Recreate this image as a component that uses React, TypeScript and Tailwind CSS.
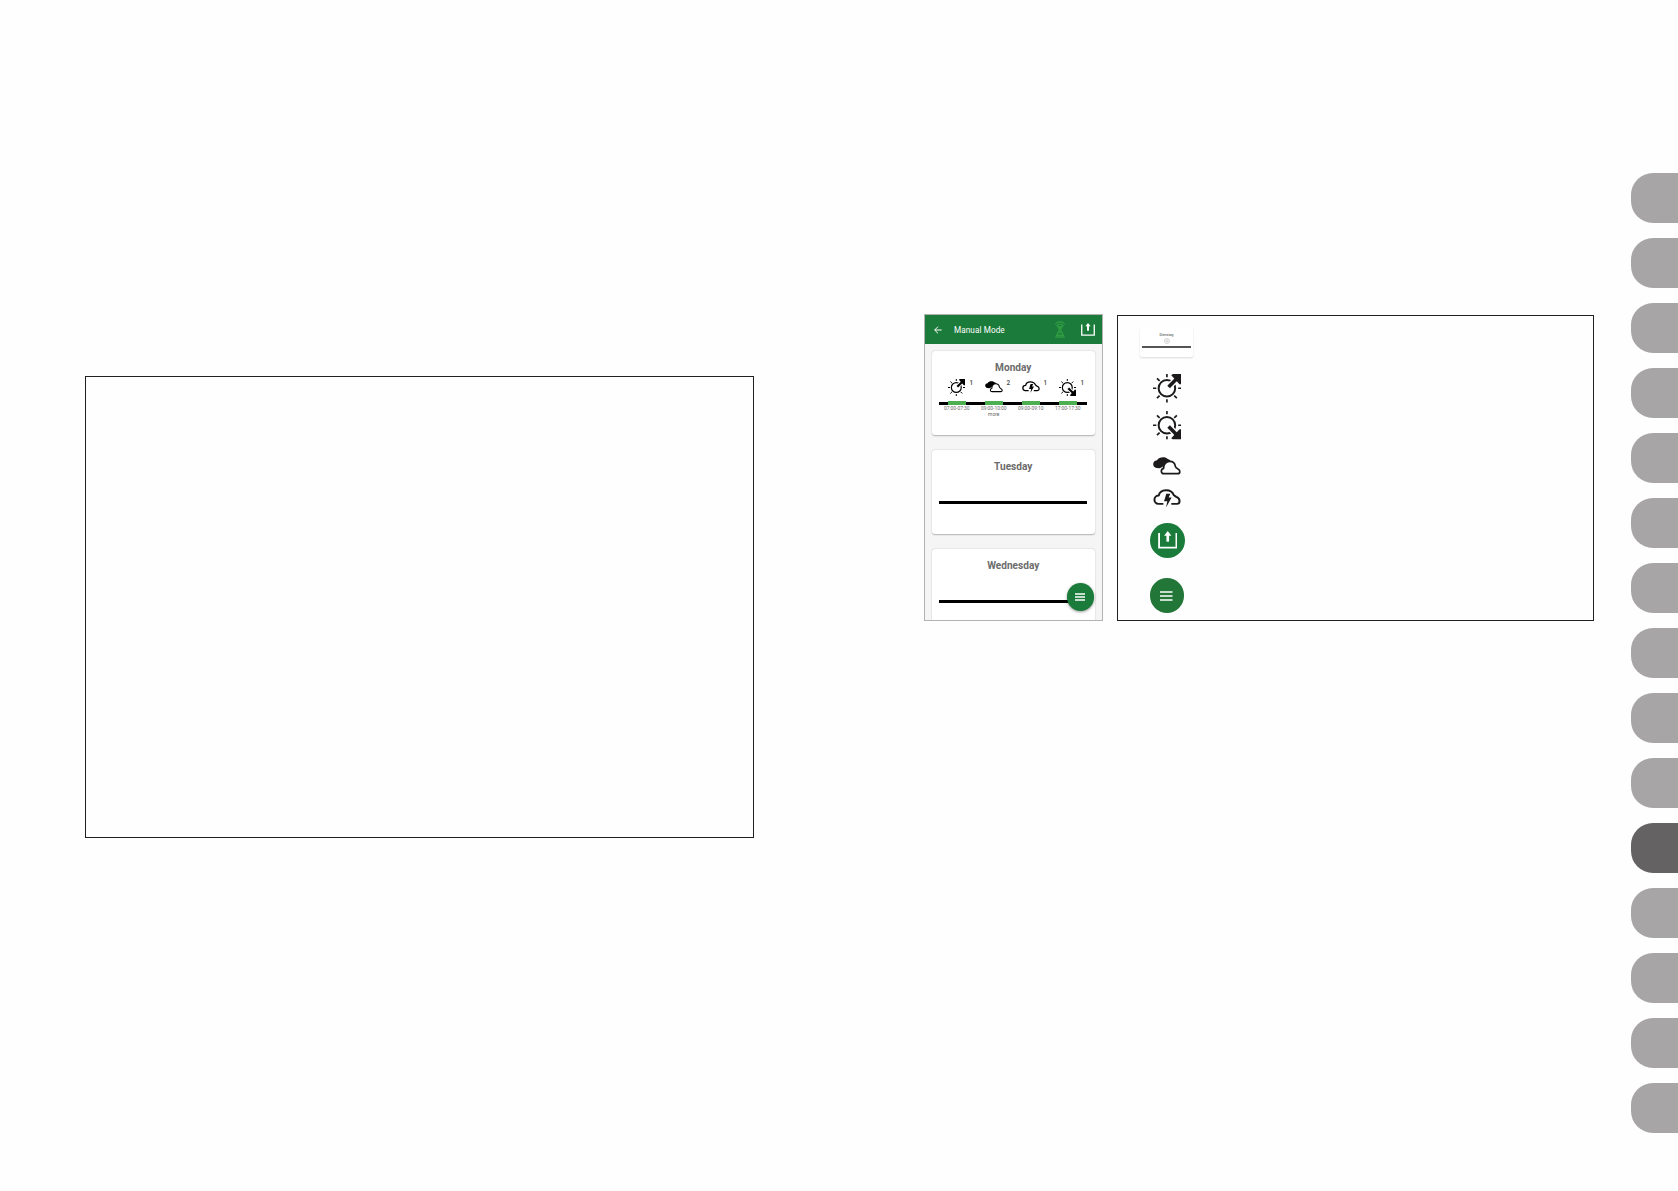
interface IconProps {
  className?: string;
}

interface Slot {
  icon: React.ReactNode;
  count: number;
  time: string;
  more?: boolean;
}

const SunRising: React.FC<IconProps> = ({ className }) => (
  <svg viewBox="0 0 86 86" className={className} fill="none" stroke="currentColor">
    <circle cx="42" cy="43" r="25" strokeWidth="6" />
    <path
      d="M42 0v10M42 76v10M0 43h10M76 43h10M12 13l8 8M12 73l8-8M72 73l-8-8"
      strokeWidth="5"
    />
    <path d="M50 36L68 18" stroke="white" strokeWidth="19" />
    <path d="M47 39L70 16" strokeWidth="11" />
    <path d="M55 4L60 0H86V31L80 31Z" fill="currentColor" stroke="none" />
  </svg>
);

const Clouds: React.FC<IconProps> = ({ className }) => (
  <svg viewBox="0 0 84 54" className={className}>
    <path
      d="M11 33C-3 31-3 11 12 10C17-1 38-2 44 6C51 7 54 12 53 17H41L28 30L20 34Z"
      fill="currentColor"
    />
    <path
      d="M33 50C23 50 22 37 32 34C31 23 39 13 50 13C60 13 66 19 67 28C68 32 71 34 75 36C83 40 82 50 74 50Z"
      fill="white"
      stroke="currentColor"
      strokeWidth="5"
      strokeLinejoin="round"
    />
  </svg>
);

const StormCloud: React.FC<IconProps> = ({ className }) => (
  <svg viewBox="0 0 84 56" className={className}>
    <path
      d="M31 45H16A12 12 0 0 1 17 20C21 -1 55 -2 63 19L70 24C84 29 82 45 72 45H55"
      fill="none"
      stroke="currentColor"
      strokeWidth="6"
      strokeLinejoin="round"
    />
    <path d="M40 14H52L47 26H56L39 56L43 37H33Z" fill="currentColor" />
  </svg>
);

const Upload: React.FC<IconProps> = ({ className }) => (
  <svg viewBox="0 0 58 54" className={className} fill="none" stroke="white">
    <path d="M3 6V50H55V6" strokeWidth="5.5" />
    <path d="M29 32V12" strokeWidth="8" />
    <path d="M18 14L29 0L40 14Z" fill="white" stroke="none" />
  </svg>
);

const Hourglass: React.FC<IconProps> = ({ className }) => (
  <svg viewBox="0 0 34 50" className={className} fill="none" stroke="#2f9b43" strokeWidth="4">
    <path d="M3 9C10 0 24 0 31 9M7 15C12 7 22 7 27 15M11 17L17 24L23 17Z" />
    <path d="M17 22L6 44M17 22L28 44M11 33H23M3 47H31M6 42H28" />
    <circle cx="17" cy="21" r="3" />
  </svg>
);

const slots: Slot[] = [
  {
    icon: <SunRising className="h-[17px] w-[17px]" />,
    count: 1,
    time: "07:00-07:30",
  },
  {
    icon: <Clouds className="h-[11.5px] w-[18px]" />,
    count: 2,
    time: "09:00-10:00",
    more: true,
  },
  {
    icon: <StormCloud className="h-[12px] w-[18px]" />,
    count: 1,
    time: "09:00-09:10",
  },
  {
    icon: <SunRising className="h-[17px] w-[17px] -scale-y-100" />,
    count: 1,
    time: "17:00-17:30",
  },
];

const tabs = Array.from({ length: 15 }, (_, i) => i);

const DayCard: React.FC<{ title: string; children?: React.ReactNode }> = ({
  title,
  children,
}) => (
  <div className="h-[84.5px] w-[162.5px] shrink-0 rounded-[3px] bg-white px-[7.25px] pt-[10px] shadow-[0_0.5px_1.5px_rgba(0,0,0,0.28)]">
    <h2 className="h-[13px] text-center text-[10.1px] leading-[13px] font-bold text-[#6b6b6b]">
      {title}
    </h2>
    {children || <div className="mt-[28.3px] h-[2.9px] bg-black" />}
  </div>
);

const Phone = () => (
  <section className="relative mt-[314px] ml-[170px] flex h-[307px] w-[179px] shrink-0 flex-col overflow-hidden border border-[#b2b2b2] bg-[#f5f5f6]">
    <header className="flex h-[29px] shrink-0 items-center bg-[#1a7b3a] pl-[9px] text-white">
      <svg viewBox="0 0 24 24" className="h-[8px] w-[8px]" fill="none" stroke="currentColor" strokeWidth="3">
        <path d="M23 12H2M12 2L2 12L12 22" />
      </svg>
      <span className="mt-[1px] ml-[12px] w-[52px] text-[8.2px] tracking-[0.08px] whitespace-nowrap">
        Manual Mode
      </span>
      <Hourglass className="ml-[48px] h-[17px] w-[12px]" />
      <Upload className="ml-[15px] h-[13px] w-[14px]" />
    </header>
    <div className="flex flex-col gap-[14.5px] pt-[6.5px] pl-[7px]">
      <DayCard title="Monday">
        <div className="relative mt-[4px] grid grid-cols-4 before:absolute before:top-[24.3px] before:h-[2.9px] before:w-full before:bg-black">
          {slots.map((slot, i) => (
            <div key={i} className="relative right-[1px] flex flex-col items-center">
              <div className="mt-[0.5px] flex h-[18px] items-center">{slot.icon}</div>
              <span className="absolute top-[1.5px] right-[2px] text-[6.4px] leading-[8px] font-medium text-[#444]">
                {slot.count}
              </span>
              <div className="mt-[5.3px] h-[4px] w-[17.5px] bg-[#4caf50]" />
              <div className="mt-[0.2px] text-center text-[4.9px] leading-[6px] whitespace-nowrap text-[#666]">
                {slot.time}
                {slot.more && <div>more</div>}
              </div>
            </div>
          ))}
        </div>
      </DayCard>
      <DayCard title="Tuesday" />
      <DayCard title="Wednesday" />
    </div>
    {/* floating menu button */}
    <div className="absolute top-[268px] left-[141.5px] flex h-[27.5px] w-[27.5px] items-center justify-center rounded-full bg-[#1a7b3a] shadow-[0_1px_3px_rgba(0,0,0,0.4)]">
      <svg viewBox="0 0 10 8" className="h-[8px] w-[10px]" stroke="white" strokeWidth="1.4">
        <path d="M0 1H10M0 4H10M0 7H10" />
      </svg>
    </div>
  </section>
);

const Legend = () => (
  <section className="mt-[315px] ml-[14px] flex h-[306px] w-[477px] shrink-0 flex-col border border-[#231f20] pt-[12px] pl-[21px] text-[#1c1a1b]">
    <div className="flex w-[55px] flex-col items-center">
      <div className="flex h-[29px] w-[53px] flex-col items-center rounded-[2px] bg-white pt-[4.5px] shadow-[0_1px_2px_rgba(0,0,0,0.14)]">
        <span className="text-[3.6px] leading-[5px] text-[#444]">Dienstag</span>
        <svg viewBox="0 0 20 20" className="mt-[0.5px] h-[6px] w-[6px]" fill="none" stroke="#aaa" strokeWidth="1.6">
          <circle cx="10" cy="10" r="8.5" />
          <circle cx="10" cy="10" r="3.5" />
        </svg>
        <div className="mt-[2px] h-[1.7px] w-[49px] bg-[#555]" />
      </div>
      <SunRising className="mt-[17px] ml-[0.6px] h-[28.5px] w-[28.5px]" />
      <SunRising className="mt-[8.4px] ml-[0.6px] h-[28.5px] w-[28.5px] -scale-y-100" />
      <Clouds className="mt-[17.3px] h-[18px] w-[28px]" />
      <StormCloud className="mt-[14px] h-[18.5px] w-[28px]" />
      <div className="mt-[15.8px] ml-[1.5px] flex h-[35px] w-[35px] items-center justify-center rounded-full bg-[#1a7b3a]">
        <Upload className="h-[18px] w-[19.5px]" />
      </div>
      <div className="mt-[20.5px] flex h-[35px] w-[34px] items-center justify-center rounded-full bg-[#227638]">
        <svg viewBox="0 0 12.5 10" className="h-[10px] w-[12.5px]" stroke="white" strokeWidth="1.6">
          <path d="M0 1H12.5M0 5H12.5M0 9H12.5" />
        </svg>
      </div>
    </div>
  </section>
);

export const App: React.FC = () => {
  return (
    <main className="flex h-[1191px] w-[1678px] items-start overflow-hidden bg-[#fefefe] font-[Roboto,sans-serif]">
      <section className="mt-[376px] ml-[85px] h-[462px] w-[669px] shrink-0 border border-[#231f20]" />
      <Phone />
      <Legend />
      {/* page index tabs */}
      <nav className="mt-[173.3px] ml-[37.3px] flex w-[47px] shrink-0 flex-col gap-[15px]">
        {tabs.map((tab) => (
          <div
            key={tab}
            className={
              tab === 10
                ? "h-[50px] rounded-l-[22px] bg-[#646263]"
                : "h-[50px] rounded-l-[22px] bg-[#a7a5a6]"
            }
          />
        ))}
      </nav>
    </main>
  );
};

export default App;
